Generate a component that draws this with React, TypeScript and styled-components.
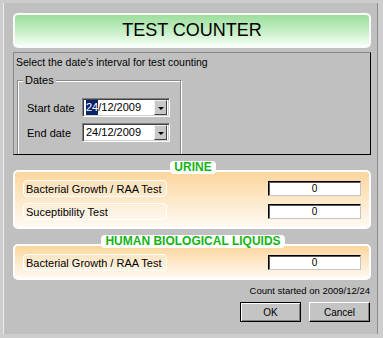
import React from 'react';
import styled, { createGlobalStyle } from 'styled-components';

const GlobalStyle = createGlobalStyle`
  html, body {
    margin: 0;
    padding: 0;
    background: #cdcdcd;
  }
  body {
    font-family: "Liberation Sans", Arial, sans-serif;
    font-size: 11px;
    color: #000;
  }
  * {
    box-sizing: border-box;
  }
`;

const Frame = styled.div`
  width: 383px;
  height: 338px;
  padding: 3px 5px 4px 3px;
  background: #cdcdcd;
`;

const Window = styled.div`
  height: 100%;
  background: #c0c0c0;
  border-left: 1px solid #ececec;
  border-right: 1px solid #8a8a8a;
  padding: 10px 6px 0 9px;
  display: flex;
  flex-direction: column;
`;

const Header = styled.div`
  height: 35px;
  border: 2px solid #fbfbfb;
  border-radius: 5px;
  background: linear-gradient(180deg, #9cdf9c 0%, #c8efc8 55%, #f6fff6 100%);
  display: flex;
  align-items: center;
  justify-content: center;
  font-size: 18px;
  margin-bottom: 4px;
`;

const DatePanel = styled.div`
  height: 103px;
  border-style: solid;
  border-width: 1px;
  border-color: #8a8a8a #000 #000 #8a8a8a;
  padding: 3px 2px 0 2px;
  overflow: hidden;
`;

const Intro = styled.div`
  font-size: 10.5px;
  line-height: 13px;
`;

const GroupBox = styled.div`
  position: relative;
  width: 164px;
  height: 90px;
  margin: 11px 0 0 1px;
  border: 1px solid #8a8a8a;
  box-shadow: inset 1px 1px 0 #fff, 1px 1px 0 #fff;
  padding: 17px 0 0 9px;
  display: flex;
  flex-direction: column;
  gap: 6px;
`;

const Legend = styled.span`
  position: absolute;
  top: -7px;
  left: 5px;
  padding: 0 2px;
  background: #c0c0c0;
  line-height: 13px;
`;

const DateRow = styled.div`
  display: flex;
  align-items: center;
`;

const DateLabel = styled.span`
  width: 55px;
`;

const Combo = styled.div`
  width: 88px;
  height: 19px;
  background: #fff;
  border-style: solid;
  border-width: 1px;
  border-color: #808080 #fff #fff #808080;
  box-shadow: inset 1px 1px 0 #404040, inset -1px -1px 0 #d4d0c8;
  display: flex;
  align-items: center;
  padding: 0 2px 0 3px;
`;

const ComboText = styled.span`
  flex: 1;
  line-height: 15px;
`;

const Selected = styled.span`
  background: #0a246a;
  color: #fff;
  display: inline-block;
  line-height: 15px;
`;

const DropButton = styled.div`
  width: 13px;
  height: 15px;
  background: #c8c8c8;
  border-style: solid;
  border-width: 1px;
  border-color: #f0f0f0 #404040 #404040 #f0f0f0;
  display: flex;
  align-items: center;
  justify-content: center;
`;

const Arrow = styled.span`
  width: 0;
  height: 0;
  border-left: 3px solid transparent;
  border-right: 3px solid transparent;
  border-top: 3px solid #000;
  margin-top: 1px;
`;

const Section = styled.div<{ $top: number }>`
  display: flex;
  flex-direction: column;
  margin-top: ${p => p.$top}px;
`;

const Badge = styled.div`
  align-self: center;
  position: relative;
  z-index: 1;
  height: 13px;
  line-height: 13px;
  padding: 0 4px;
  margin: 0 0 -4px 2px;
  background: #fff;
  border-radius: 4px;
  color: #14b414;
  font-weight: bold;
  font-size: 12px;
`;

const OrangePanel = styled.div`
  border: 2px solid #fff;
  border-radius: 5px;
  background: linear-gradient(180deg, #fcd69c 0%, #fde6c4 45%, #fffaf3 100%);
  padding: 8px 8px 7px 8px;
  display: flex;
  flex-direction: column;
  gap: 6px;
`;

const TestRow = styled.div`
  display: flex;
  align-items: center;
  justify-content: space-between;
  height: 17px;
`;

const TestLabel = styled.div`
  width: 144px;
  height: 17px;
  border: 1.5px solid #fff;
  border-radius: 4px;
  background: rgba(255, 255, 255, 0.18);
  padding-left: 2px;
  display: flex;
  align-items: center;
  font-size: 11px;
`;

const CountBox = styled.div`
  width: 93px;
  height: 15px;
  background: #fff;
  border-style: solid;
  border-width: 1px;
  border-color: #000 #c4c4c4 #c4c4c4 #000;
  box-shadow: inset 1px 1px 0 #5a5a5a;
  display: flex;
  align-items: center;
  justify-content: center;
  font-size: 10px;
`;

const StartedNote = styled.div`
  margin: 5px 1px 0 0;
  text-align: right;
  font-size: 9.5px;
  line-height: 12px;
`;

const ButtonBar = styled.div`
  display: flex;
  justify-content: flex-end;
  gap: 8px;
  margin: 5px 1px 0 0;
`;

const Button = styled.button<{ $default?: boolean }>`
  width: 61px;
  height: 20px;
  padding: 0;
  font-family: inherit;
  font-size: 10px;
  color: #000;
  background: #c4c4c4;
  border-style: solid;
  border-width: 1px;
  border-color: ${p => (p.$default ? '#000' : '#fff #000 #000 #fff')};
  box-shadow: ${p =>
    p.$default
      ? 'inset 1px 1px 0 #fff, inset -1px -1px 0 #808080'
      : 'inset -1px -1px 0 #808080'};
`;

const rows = {
  urine: ['Bacterial Growth / RAA Test', 'Suceptibility Test'],
  human: ['Bacterial Growth / RAA Test'],
};

export default function App() {
  return (
    <>
      <GlobalStyle />
      <Frame>
        <Window>
          <Header>TEST COUNTER</Header>

          <DatePanel>
            <Intro>Select the date's interval for test counting</Intro>
            <GroupBox>
              <Legend>Dates</Legend>
              <DateRow>
                <DateLabel>Start date</DateLabel>
                <Combo>
                  <ComboText>
                    <Selected>24</Selected>/12/2009
                  </ComboText>
                  <DropButton>
                    <Arrow />
                  </DropButton>
                </Combo>
              </DateRow>
              <DateRow>
                <DateLabel>End date</DateLabel>
                <Combo>
                  <ComboText>24/12/2009</ComboText>
                  <DropButton>
                    <Arrow />
                  </DropButton>
                </Combo>
              </DateRow>
            </GroupBox>
          </DatePanel>

          <Section $top={6}>
            <Badge>URINE</Badge>
            <OrangePanel>
              {rows.urine.map(name => (
                <TestRow key={name}>
                  <TestLabel>{name}</TestLabel>
                  <CountBox>0</CountBox>
                </TestRow>
              ))}
            </OrangePanel>
          </Section>

          <Section $top={6}>
            <Badge>HUMAN BIOLOGICAL LIQUIDS</Badge>
            <OrangePanel>
              {rows.human.map(name => (
                <TestRow key={name}>
                  <TestLabel>{name}</TestLabel>
                  <CountBox>0</CountBox>
                </TestRow>
              ))}
            </OrangePanel>
          </Section>

          <StartedNote>Count started on 2009/12/24</StartedNote>
          <ButtonBar>
            <Button $default>OK</Button>
            <Button>Cancel</Button>
          </ButtonBar>
        </Window>
      </Frame>
    </>
  );
}
